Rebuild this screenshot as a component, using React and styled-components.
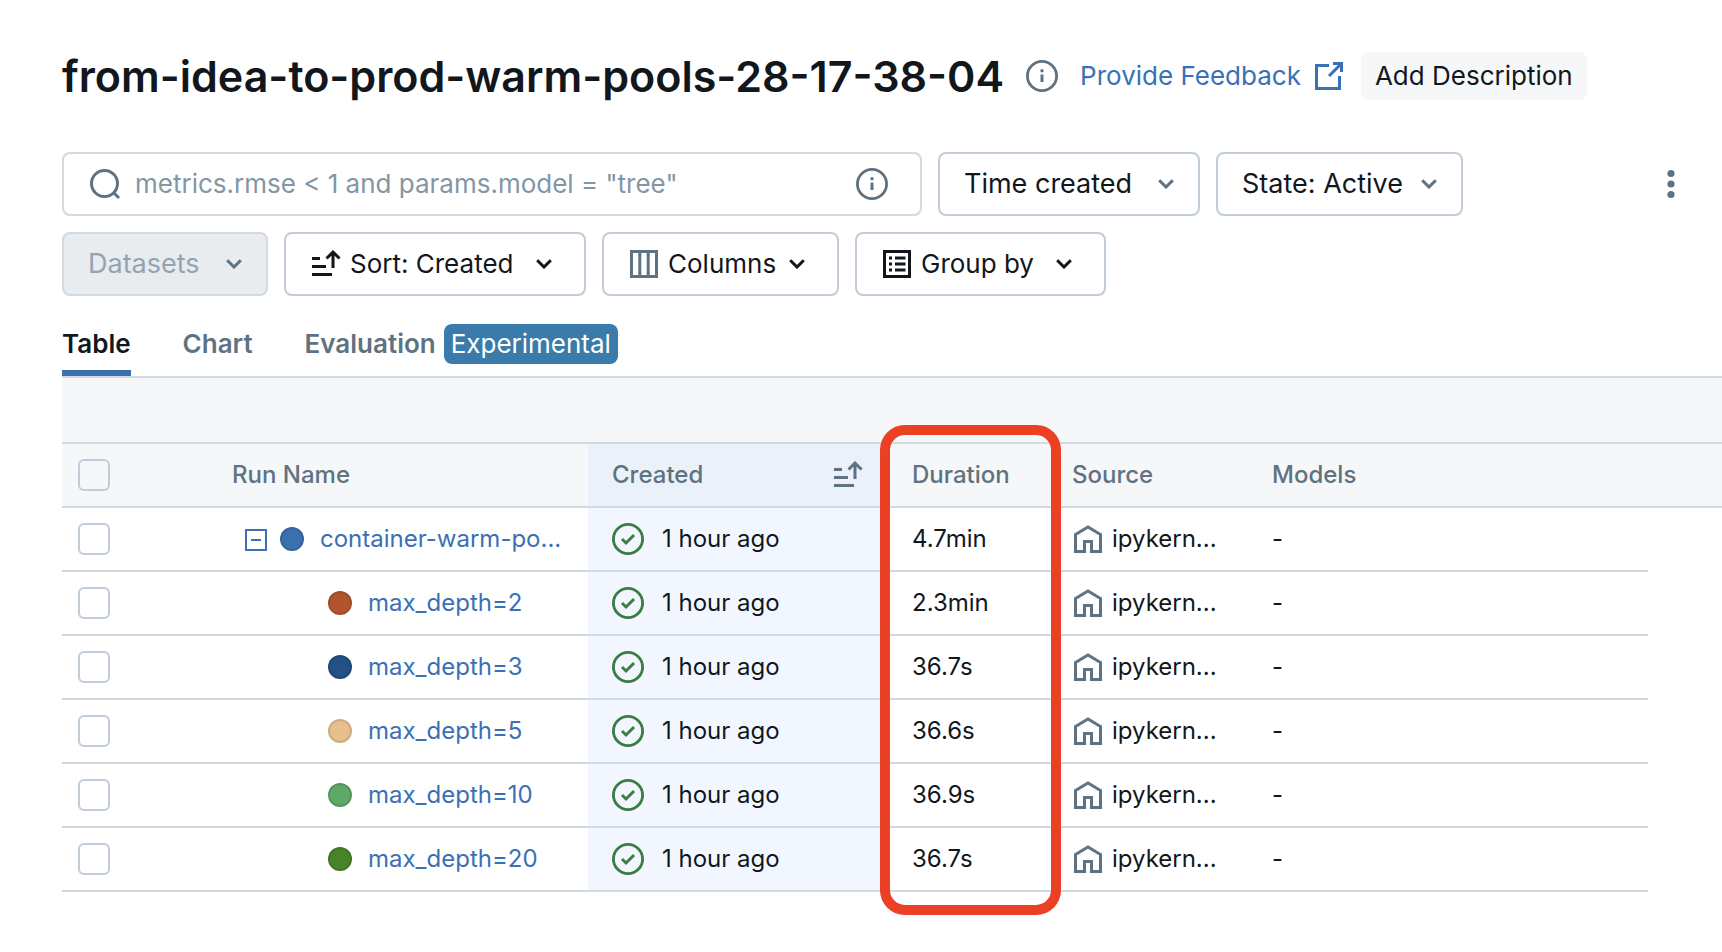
import React from 'react';
import styled, { createGlobalStyle } from 'styled-components';

const c = {
  text: '#11171c',
  muted: '#5f7281',
  placeholder: '#8396a5',
  link: '#3a70b5',
  border: '#c0cdd8',
  line: '#d1d9e1',
  band: '#f6f7f9',
  green: '#3d7b46',
};

const GlobalStyle = createGlobalStyle`
  *, *::before, *::after { box-sizing: border-box; }
  body {
    margin: 0;
    background: #fff;
    color: ${c.text};
    font-family: Inter, "Liberation Sans", sans-serif;
    font-size: 26px;
    line-height: 40px;
  }
  button, input, select { font: inherit; color: inherit; margin: 0; }
  svg { display: block; flex: none; }
`;

const Page = styled.main`
  padding: 52px 0 60px 62px;
`;

const Header = styled.header`
  display: flex;
  align-items: center;
  height: 48px;
  margin-bottom: 52px;
  white-space: nowrap;
`;

const Title = styled.h1`
  margin: 0 22px 0 0;
  font-size: 43px;
  line-height: 48px;
  font-weight: 600;
`;

const IconButton = styled.button`
  display: flex;
  padding: 0;
  border: 0;
  background: none;
  color: ${c.muted};
`;

const FeedbackLink = styled.a`
  display: flex;
  align-items: center;
  gap: 12px;
  margin: 0 16px 0 22px;
  color: ${c.link};
  text-decoration: none;
`;

const DescriptionButton = styled.button`
  height: 48px;
  padding: 0 14px;
  border: 0;
  border-radius: 8px;
  background: ${c.band};
`;

const Toolbar = styled.section`
  display: flex;
  flex-direction: column;
  gap: 16px;
  padding-right: 35px;
`;

const ToolbarRow = styled.div`
  display: flex;
  align-items: center;
  gap: 16px;
`;

const Search = styled.label`
  display: flex;
  align-items: center;
  gap: 14px;
  flex: 0 1 860px;
  height: 64px;
  padding: 0 32px 0 25px;
  border: 2px solid ${c.line};
  border-radius: 8px;
  color: ${c.muted};
`;

const SearchInput = styled.input`
  flex: 1;
  min-width: 0;
  padding: 0;
  border: 0;
  outline: 0;
  background: none;
  color: ${c.text};
  &::placeholder { color: ${c.placeholder}; opacity: 1; }
`;

const SelectBox = styled.div`
  display: grid;
  align-items: center;
  width: ${(p) => p.$width}px;
  color: ${c.muted};
  > * { grid-area: 1 / 1; }
  > svg { justify-self: end; margin-right: 26px; pointer-events: none; }
`;

const Select = styled.select`
  appearance: none;
  width: 100%;
  height: 64px;
  padding: 0 44px 0 24px;
  border: 2px solid ${c.border};
  border-radius: 8px;
  background: #fff;
  color: ${c.text};
  font-size: 27px;
`;

const MenuButton = styled.button`
  display: flex;
  align-items: center;
  width: ${(p) => p.$width}px;
  height: 64px;
  padding: 0 0 0 24px;
  border: 2px solid ${c.border};
  border-radius: 8px;
  background: #fff;
  white-space: nowrap;
  > svg:first-child { margin-right: 8px; color: ${(p) => p.$icon || c.text}; }
  > svg:last-child { margin: 0 ${(p) => p.$end || 32}px 0 auto; }
  &:disabled {
    border-color: ${c.line};
    background: #e8ecef;
    color: #92a4b3;
    font-size: 27px;
    > svg { color: ${c.muted}; }
  }
`;

const MoreButton = styled(IconButton)`
  margin-left: auto;
`;

const Tabs = styled.nav`
  display: flex;
  gap: 52px;
  margin-top: 28px;
  border-bottom: 2px solid ${c.line};
`;

const Tab = styled.a`
  display: flex;
  gap: 8px;
  padding-bottom: 6px;
  border-bottom: 6px solid ${(p) => (p.$active ? '#3b6fb0' : 'transparent')};
  color: ${(p) => (p.$active ? c.text : c.muted)};
  font-weight: 600;
  text-decoration: none;
`;

const Badge = styled.span`
  padding: 0 7px;
  border-radius: 8px;
  background: #3a7bab;
  color: #fff;
  font-weight: 400;
`;

const TableArea = styled.div`
  position: relative;
`;

const RunsTable = styled.table`
  width: 100%;
  table-layout: fixed;
  border-collapse: separate;
  border-spacing: 0;
  font-size: 24px;
  line-height: 32px;
  white-space: nowrap;
`;

const Col = styled.col`
  width: ${(p) => (p.$width ? `${p.$width}px` : 'auto')};
`;

const BandCell = styled.td`
  height: 66px;
  padding: 0;
  border-bottom: 2px solid ${c.line};
  background: ${c.band};
`;

const HeadCell = styled.th`
  height: 64px;
  padding: 0 24px 0 ${(p) => p.$pad ?? 24}px;
  border-bottom: 2px solid ${c.line};
  background: ${(p) => (p.$sorted ? '#eaf1f9' : c.band)};
  color: ${c.muted};
  font-weight: 500;
  text-align: left;
`;

const HeadLabel = styled.div`
  display: flex;
  align-items: center;
  justify-content: space-between;
`;

const Cell = styled.td`
  height: 64px;
  padding: 0 0 0 ${(p) => p.$pad ?? 24}px;
  border-bottom: 2px solid ${c.line};
  background: ${(p) => (p.$sorted ? '#f2f7ff' : 'transparent')};
`;

const Inline = styled.div`
  display: flex;
  align-items: center;
  gap: ${(p) => p.$gap}px;
  > svg { color: ${(p) => p.$icon}; }
`;

const Checkbox = styled.input`
  display: block;
  appearance: none;
  width: 32px;
  height: 32px;
  border: 2px solid ${c.border};
  border-radius: 6px;
`;

const ExpandButton = styled(IconButton)`
  margin-right: 12px;
  color: ${c.link};
`;

const Dot = styled.span`
  width: 24px;
  height: 24px;
  margin-right: 16px;
  border: 2px solid rgba(0, 0, 0, 0.1);
  border-radius: 50%;
  background: ${(p) => p.$color};
`;

const RunLink = styled.a`
  color: ${c.link};
  text-decoration: none;
`;

const Highlight = styled.div`
  position: absolute;
  top: 47px;
  bottom: -23px;
  left: 818px;
  width: 181px;
  border: 10px solid #ec4024;
  border-radius: 25px;
  pointer-events: none;
`;

const Svg = ({ w = 32, h = 32, sw = 3, children }) => (
  <svg width={w} height={h} viewBox={`0 0 ${w} ${h}`} fill="none" stroke="currentColor" strokeWidth={sw} aria-hidden="true">
    {children}
  </svg>
);

const Chevron = () => (
  <Svg w={16} h={10}><path d="M1.2 1.2 8 8l6.800-6.800" /></Svg>
);

const InfoIcon = () => (
  <Svg>
    <circle cx="16" cy="16" r="14.600" strokeWidth="2.800" />
    <path d="M16 14.500V22" />
    <circle cx="16" cy="10.800" r="1.700" fill="currentColor" stroke="none" />
  </Svg>
);

const SearchIcon = () => (
  <Svg>
    <circle cx="15.500" cy="15.500" r="13" />
    <path d="M24.500 24.500 30 30" />
  </Svg>
);

const ExternalIcon = () => (
  <Svg>
    <path d="M16 5.500H3.500V28.500H26.500V16" />
    <path d="M20 3.500H28.500V12M28 4 16 16" />
  </Svg>
);

const SortIcon = () => (
  <Svg>
    <path d="M2 10.500H10M2 18.500H16M2 26.500H22" />
    <path d="M23 20V4M16.500 10.500 23 4 29.500 10.500" />
  </Svg>
);

const ColumnsIcon = () => (
  <Svg>
    <path d="M3.500 3.500H28.500V28.500H3.500ZM11.800 3.500V28.500M20.200 3.500V28.500" />
  </Svg>
);

const GroupIcon = () => (
  <Svg>
    <path d="M3.500 3.500H28.500V28.500H3.500Z" />
    <path d="M8 10H11M8 16H11M8 22H11M14 10H24.500M14 16H24.500M14 22H24.500" />
  </Svg>
);

const MoreIcon = () => (
  <Svg>
    {[5.500, 16, 26.500].map((y) => (
      <circle key={y} cx="16" cy={y} r="3.600" fill="currentColor" stroke="none" />
    ))}
  </Svg>
);

const MinusIcon = () => (
  <Svg w={24} h={24} sw={2}>
    <path d="M2 3H22V23H2ZM7 13H17" />
  </Svg>
);

const CheckIcon = () => (
  <Svg>
    <circle cx="16" cy="16" r="14.600" strokeWidth="2.800" />
    <path d="M10 16 14 20 22 12" />
  </Svg>
);

const HomeIcon = () => (
  <Svg>
    <path d="M3.500 11.500 16 4 28.500 11.500V28.500H19.500V18.500H12.500V28.500H3.500Z" />
  </Svg>
);

const runs = [
  { name: 'container-warm-po...', color: '#3b6fb0', duration: '4.7min', parent: true },
  { name: 'max_depth=2', color: '#b1562c', duration: '2.3min' },
  { name: 'max_depth=3', color: '#245183', duration: '36.7s' },
  { name: 'max_depth=5', color: '#e8bf8e', duration: '36.6s' },
  { name: 'max_depth=10', color: '#5fa868', duration: '36.9s' },
  { name: 'max_depth=20', color: '#478428', duration: '36.7s' },
];

const RunRow = ({ run }) => (
  <tr>
    <Cell $pad={16}><Checkbox type="checkbox" aria-label={`Select ${run.name}`} /></Cell>
    <Cell $pad={run.parent ? 28 : 112}>
      <Inline $gap={0}>
        {run.parent && <ExpandButton aria-label="Collapse child runs"><MinusIcon /></ExpandButton>}
        <Dot $color={run.color} />
        <RunLink href="#run">{run.name}</RunLink>
      </Inline>
    </Cell>
    <Cell $sorted>
      <Inline $gap={18} $icon={c.green}><CheckIcon />1 hour ago</Inline>
    </Cell>
    <Cell>{run.duration}</Cell>
    <Cell>
      <Inline $gap={8} $icon={c.muted}><HomeIcon />ipykern...</Inline>
    </Cell>
    <Cell>-</Cell>
  </tr>
);

export default function App() {
  return (
    <Page>
      <GlobalStyle />
      <Header>
        <Title>from-idea-to-prod-warm-pools-28-17-38-04</Title>
        <IconButton aria-label="Experiment information"><InfoIcon /></IconButton>
        <FeedbackLink href="#feedback">Provide Feedback<ExternalIcon /></FeedbackLink>
        <DescriptionButton>Add Description</DescriptionButton>
      </Header>

      <Toolbar>
        <ToolbarRow>
          <Search>
            <SearchIcon />
            <SearchInput type="text" aria-label="Search runs" placeholder={'metrics.rmse < 1 and params.model = "tree"'} />
            <InfoIcon />
          </Search>
          <SelectBox $width={262}>
            <Select aria-label="Start time"><option>Time created</option></Select>
            <Chevron />
          </SelectBox>
          <SelectBox $width={247}>
            <Select aria-label="Lifecycle state"><option>State: Active</option></Select>
            <Chevron />
          </SelectBox>
          <MoreButton aria-label="More options"><MoreIcon /></MoreButton>
        </ToolbarRow>
        <ToolbarRow>
          <MenuButton $width={206} $end={24} disabled>Datasets<Chevron /></MenuButton>
          <MenuButton $width={302}><SortIcon />Sort: Created<Chevron /></MenuButton>
          <MenuButton $width={237} $icon={c.muted}><ColumnsIcon />Columns<Chevron /></MenuButton>
          <MenuButton $width={251}><GroupIcon />Group by<Chevron /></MenuButton>
        </ToolbarRow>
      </Toolbar>

      <Tabs>
        <Tab href="#table" $active aria-current="page">Table</Tab>
        <Tab href="#chart">Chart</Tab>
        <Tab href="#evaluation">Evaluation<Badge>Experimental</Badge></Tab>
      </Tabs>

      <TableArea>
        <RunsTable>
          <colgroup>
            <Col $width={154} />
            <Col $width={372} />
            <Col $width={300} />
            <Col $width={160} />
            <Col $width={200} />
            <Col />
            <Col $width={74} />
          </colgroup>
          <thead>
            <tr><BandCell colSpan={7} /></tr>
            <tr>
              <HeadCell $pad={16}><Checkbox type="checkbox" aria-label="Select all runs" /></HeadCell>
              <HeadCell $pad={16}>Run Name</HeadCell>
              <HeadCell $sorted aria-sort="descending">
                <HeadLabel>Created<SortIcon /></HeadLabel>
              </HeadCell>
              <HeadCell>Duration</HeadCell>
              <HeadCell>Source</HeadCell>
              <HeadCell colSpan={2}>Models</HeadCell>
            </tr>
          </thead>
          <tbody>
            {runs.map((run) => <RunRow key={run.name} run={run} />)}
          </tbody>
        </RunsTable>
        <Highlight />
      </TableArea>
    </Page>
  );
}
